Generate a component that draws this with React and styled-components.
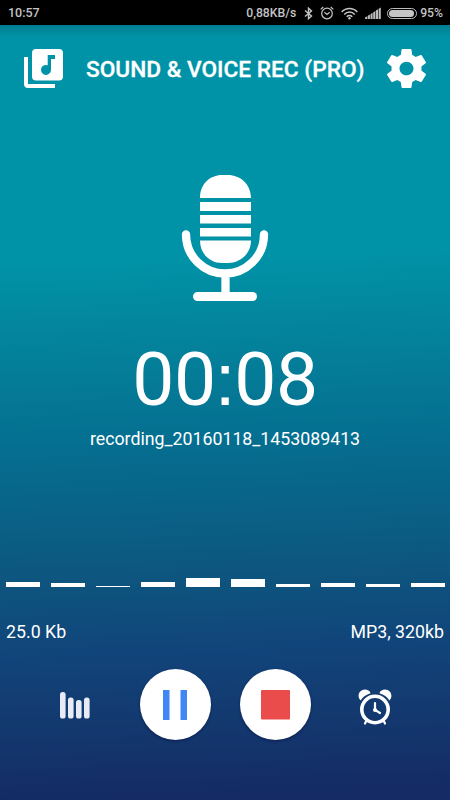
import styled, { createGlobalStyle } from 'styled-components'

const GlobalStyle = createGlobalStyle`
  * {
    box-sizing: border-box;
  }
  body {
    margin: 0;
    font-family: Roboto, 'Liberation Sans', sans-serif;
    color: #fff;
  }
  svg {
    display: block;
    flex-shrink: 0;
  }
  button {
    display: flex;
    align-items: center;
    justify-content: center;
    padding: 0;
    border: 0;
    background: none;
    color: inherit;
  }
`

const Screen = styled.div`
  display: flex;
  flex-direction: column;
  width: 450px;
  height: 800px;
  overflow: hidden;
`

const StatusBar = styled.div`
  display: flex;
  align-items: center;
  height: 25px;
  padding: 1px 7px 0 8px;
  background: #000;
  color: #c4c4c4;
  font-size: 12.5px;
  font-weight: 500;
  line-height: 24px;
  white-space: nowrap;
`

const StatusIcons = styled.div`
  display: flex;
  align-items: center;
  margin-left: auto;
  font-size: 12.2px;
`

const StatusIcon = styled.svg`
  margin-left: ${({ $gap }) => $gap}px;
`

const Battery = styled.div`
  width: 30px;
  height: 11px;
  margin: 0 3px 0 6px;
  padding: 1px;
  border: 1px solid #bdbdbd;
  border-radius: 6px;

  &::before {
    content: '';
    display: block;
    width: 25px;
    height: 7px;
    border-radius: 4px;
    background: #c6c6c6;
  }
`

const Recorder = styled.main`
  flex: 1;
  display: flex;
  flex-direction: column;
  align-items: center;
  background:
    linear-gradient(rgba(0, 40, 50, 0.2), rgba(0, 40, 50, 0) 12px),
    linear-gradient(
      178deg,
      #0093a7 0,
      #0093a7 30%,
      #04829b 41%,
      #056e90 54%,
      #0d567f 70%,
      #11447a 80%,
      #133a70 88%,
      #142b66 98%
    );
`

const Header = styled.header`
  display: flex;
  align-items: center;
  width: 100%;
  height: 87px;
  padding: 0 24px;
`

const Title = styled.h1`
  flex: 1;
  margin: 3px 0 0 23px;
  font-size: 22.7px;
  font-weight: 500;
  line-height: 30px;
  white-space: nowrap;
  -webkit-text-stroke: 0.3px #fff;
`

const MicIcon = styled.svg`
  margin-top: 62px;
`

const Timer = styled.div`
  margin-top: 33px;
  font-size: 75px;
  line-height: 90px;
  letter-spacing: -0.4px;
`

const Colon = styled.span`
  margin: 0 -1px;
  font-family: 'Liberation Sans', sans-serif;
  line-height: 1;
`

const FileName = styled.div`
  margin-top: 3px;
  font-size: 17.75px;
  line-height: 24px;
`

const Levels = styled.div`
  display: flex;
  align-items: flex-end;
  justify-content: space-between;
  width: 100%;
  height: 20px;
  margin-top: 116px;
  padding: 0 5px 0 6px;
`

const Level = styled.div`
  width: 34px;
  background: #fff;
`

const Details = styled.div`
  display: flex;
  justify-content: space-between;
  width: 100%;
  margin-top: 33px;
  padding: 0 6px;
  font-size: 17.75px;
  line-height: 25px;
`

const Controls = styled.div`
  display: flex;
  align-items: center;
  justify-content: center;
  gap: 29px;
  width: 100%;
  margin-top: 24px;
`

const RoundButton = styled.button`
  width: 71px;
  height: 71px;
  border-radius: 50%;
  background: #fff;
  box-shadow: 0 1px 3px rgba(0, 0, 40, 0.45);
`

const SideButton = styled.button`
  width: 71px;
  height: 71px;
  padding-top: ${({ $top }) => $top}px;
`

const levels = [5, 4, 1.3, 5.5, 9.5, 8, 2.7, 4, 3.5, 4.3]

const BluetoothIcon = () => (
  <StatusIcon $gap={8} width="9" height="13" viewBox="0 0 9 13" fill="none" stroke="#c4c4c4" strokeWidth="1.4">
    <path d="M1 3.5 7.5 9 4.5 11.7V1.2L7.5 4 1 9.5" />
  </StatusIcon>
)

const AlarmStatusIcon = () => (
  <StatusIcon $gap={7} width="14" height="14" viewBox="0 0 14 14" fill="none" stroke="#c4c4c4" strokeWidth="1.2">
    <circle cx="7" cy="7.5" r="5.3" />
    <path d="M4.4 6.2 7 8.4 9.6 6.2M.7 3.4 3.3 1M13.3 3.4 10.7 1" />
  </StatusIcon>
)

const WifiIcon = () => (
  <StatusIcon $gap={7} width="17" height="13" viewBox="0 0 17 13" fill="none" stroke="#c4c4c4" strokeWidth="1.5">
    <path d="M.7 5C5 .3 12 .3 16.3 5M3.2 7.4C6.2 4.2 10.8 4.2 13.8 7.4M5.7 9.7c1.7-1.7 3.9-1.7 5.6 0" />
    <circle cx="8.5" cy="11.2" r="1.2" fill="#c4c4c4" stroke="none" />
  </StatusIcon>
)

const SignalIcon = () => (
  <StatusIcon $gap={7} width="16" height="12" viewBox="0 0 16 12" fill="#bcbcbc">
    <path d="M0 10.4 2.2 9.2V12H0zM2.8 8.8 4.9 7.5V12H2.8zM5.5 7.2 7.6 5.8V12H5.5zM8.2 5.4 10.3 4V12H8.2zM10.9 3.6 13 2.2V12h-2.1zM13.6 1.8 15.8.4V12h-2.2z" />
  </StatusIcon>
)

const LibraryIcon = () => (
  <svg width="39" height="39" viewBox="0 0 39 39" fill="#fff">
    <path d="M0 8h4v27h27v4H4a4 4 0 0 1-4-4z" />
    <path
      fillRule="evenodd"
      d="M12 0h23a4 4 0 0 1 4 4v23.500a4 4 0 0 1-4 4H12a4 4 0 0 1-4-4V4a4 4 0 0 1 4-4zM31 6H23.700v10.200a5 5 0 1 0 3.300 4.600V10h4z"
    />
  </svg>
)

const GearIcon = () => (
  <svg width="39" height="39" viewBox="2.250 2 19.500 20" preserveAspectRatio="none" fill="#fff">
    <path d="M19.430 12.980c.04-.32.07-.64.07-.98s-.03-.66-.07-.98l2.110-1.650c.19-.15.24-.42.12-.64l-2-3.460c-.12-.22-.39-.3-.61-.22l-2.490 1c-.52-.4-1.080-.73-1.690-.98l-.38-2.650C14.460 2.180 14.250 2 14 2h-4c-.25 0-.46.18-.49.42l-.38 2.650c-.61.25-1.170.59-1.690.98l-2.490-1c-.23-.09-.49 0-.61.22l-2 3.460c-.13.22-.07.49.12.64l2.110 1.650c-.04.32-.07.65-.07.98s.03.66.07.98l-2.110 1.650c-.19.15-.24.42-.12.64l2 3.460c.12.22.39.3.61.22l2.490-1c.52.4 1.080.73 1.690.98l.38 2.650c.03.24.24.42.49.42h4c.25 0 .46-.18.49-.42l.38-2.650c.61-.25 1.170-.59 1.690-.98l2.490 1c.23.09.49 0 .61-.22l2-3.460c.12-.22.07-.49-.12-.64zM12 15.500c-1.930 0-3.500-1.570-3.500-3.500s1.570-3.500 3.500-3.500 3.500 1.570 3.500 3.500-1.570 3.500-3.500 3.500z" />
  </svg>
)

const Microphone = () => (
  <MicIcon width="88" height="127" viewBox="0 0 88 127" fill="#fff">
    <path d="M19 24C19 10 29 1 41 1h6C59 1 70 10 70 24zM19 28h51v9H19zM19 41h51v8.500H19zM19 54h51v8.500H19zM19 66.500h51C70 80 59 89 47 89h-6C29 89 19 80 19 66.500z" />
    <path d="M5 60C5 82 23 99 44 99s39-17 39-39M44.500 99v22" transform="translate(0 .5)" fill="none" stroke="#fff" strokeWidth="8.300" strokeLinecap="round" />
    <rect x="12" y="118" width="64" height="9" rx="4.500" />
  </MicIcon>
)

const EqualizerIcon = () => (
  <svg width="30" height="27" viewBox="0 0 30 27" fill="#e8ebf3">
    <rect x="0" y="0" width="5.600" height="26.500" rx="2.600" />
    <rect x="8" y="5.500" width="5.600" height="21" rx="2.600" />
    <rect x="16" y="8" width="5.600" height="18.500" rx="2.600" />
    <rect x="24" y="5.500" width="5.600" height="21" rx="2.600" />
  </svg>
)

const PauseIcon = () => (
  <svg width="24" height="30" viewBox="0 0 24 30" fill="#4286f5">
    <path d="M0 0h6.500v30H0zM17.500 0H24v30h-6.500z" />
  </svg>
)

const StopIcon = () => (
  <svg width="29" height="30" viewBox="0 0 29 30" fill="#ea4b4b">
    <rect width="29" height="29.500" rx="1" />
  </svg>
)

const AlarmIcon = () => (
  <svg width="34" height="36" viewBox="0 0 34 36" fill="#fff">
    <path d="M2.600 11.500C-1.500 7.500 1 .6 7 .6C9.500.6 11.800 2 12.600 4.200Q5.800 6 2.600 11.500zM31.400 11.500C35.500 7.500 33 .6 27 .6C24.500.6 22.200 2 21.400 4.200Q28.200 6 31.400 11.500z" />
    <circle cx="17" cy="20.500" r="13.200" fill="none" stroke="#fff" strokeWidth="3.600" />
    <path d="M17 14v7l5 3M8.500 31.500 7 34.500M25.500 31.500 27 34.500" fill="none" stroke="#fff" strokeWidth="2.200" strokeLinecap="round" />
    <circle cx="17" cy="21" r="2" />
  </svg>
)

const App = () => {
  return (
    <Screen>
      <GlobalStyle />
      <StatusBar>
        <span>10:57</span>
        <StatusIcons>
          <span>0,88KB/s</span>
          <BluetoothIcon />
          <AlarmStatusIcon />
          <WifiIcon />
          <SignalIcon />
          <Battery />
          <span>95%</span>
        </StatusIcons>
      </StatusBar>
      <Recorder>
        <Header>
          <LibraryIcon />
          <Title>SOUND &amp; VOICE REC (PRO)</Title>
          <GearIcon />
        </Header>
        <Microphone />
        <Timer>
          00<Colon>:</Colon>08
        </Timer>
        <FileName>recording_20160118_1453089413</FileName>
        <Levels>
          {levels.map((level, i) => (
            <Level key={i} style={{ height: level }} />
          ))}
        </Levels>
        <Details>
          <span>25.0 Kb</span>
          <span>MP3, 320kb</span>
        </Details>
        <Controls>
          <SideButton $top={1}>
            <EqualizerIcon />
          </SideButton>
          <RoundButton>
            <PauseIcon />
          </RoundButton>
          <RoundButton>
            <StopIcon />
          </RoundButton>
          <SideButton $top={5}>
            <AlarmIcon />
          </SideButton>
        </Controls>
      </Recorder>
    </Screen>
  )
}

export default App
